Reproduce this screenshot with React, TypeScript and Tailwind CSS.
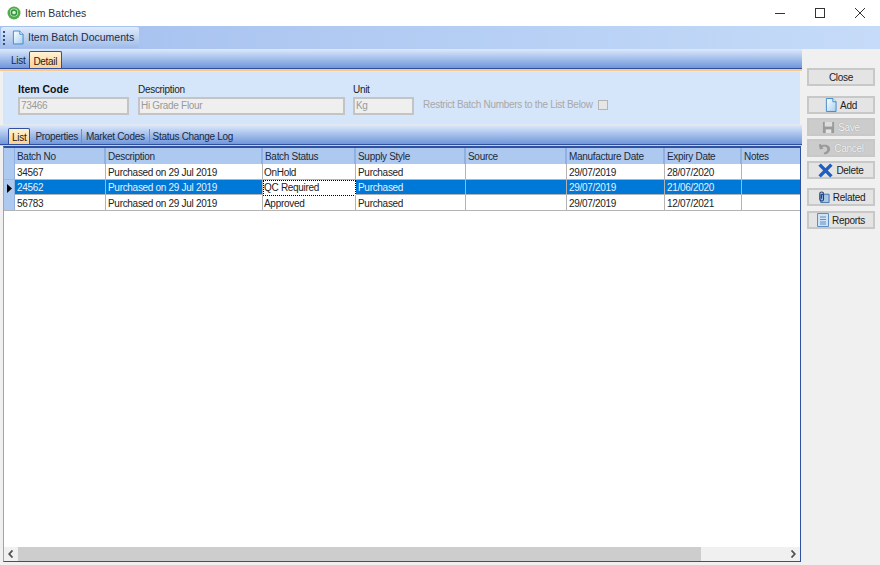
import React from 'react';

const COLS = 'grid grid-cols-[11px_91px_157px_93px_110px_101px_98px_77px_1fr]';

const batches = [
  { no: '34567', status: 'OnHold', expiry: '28/07/2020', h: 'h-[16px]' },
  { no: '24562', status: 'QC Required', expiry: '21/06/2020', h: 'h-[15px]', selected: true },
  { no: '56783', status: 'Approved', expiry: '12/07/2021', h: 'h-[16px]' },
];

const headers = ['Batch No', 'Description', 'Batch Status', 'Supply Style', 'Source', 'Manufacture Date', 'Expiry Date', 'Notes'];

function DocIcon({ className = 'w-[13px] h-[15px]' }: { className?: string }) {
  return (
    <svg viewBox="0 0 13 15" className={className}>
      <defs>
        <linearGradient id="docfill" x1="0" y1="0" x2="1" y2="1">
          <stop offset="0" stopColor="#ffffff" />
          <stop offset="1" stopColor="#a4d0f2" />
        </linearGradient>
      </defs>
      <path d="M1.5.5h7l3.5 3.5v10.5h-10.5z" fill="url(#docfill)" stroke="#3a86c8" />
      <path d="M8.5.5v3.5h3.5" fill="#e8f3fc" stroke="#3a86c8" />
    </svg>
  );
}

function SideButton({ label, icon, disabled, className = '' }: { label: string; icon?: React.ReactNode; disabled?: boolean; className?: string }) {
  return (
    <button
      className={`w-[68px] h-[18px] flex items-center justify-center gap-[3px] border-2 border-[#c8c8c8] leading-none ${disabled ? 'bg-[#cccccc] text-[#f4f4f4] [text-shadow:0_0_1px_#8a8a8a]' : 'bg-[#e4e4e4] text-[#222222]'} ${className}`}
    >
      {icon}
      <span className="pt-[2px]">{label}</span>
    </button>
  );
}

function SubTab({ label, className = '' }: { label: string; className?: string }) {
  return <div className={`h-[16px] pt-[1px] flex items-center text-[#1a2a44] ${className}`}>{label}</div>;
}

export default function App() {
  return (
    <div className="w-[880px] h-[565px] overflow-hidden flex flex-col bg-[#f0f0f0] text-[10px] tracking-[-0.3px] text-[#222222] font-['Liberation_Sans',sans-serif]">
      {/* title bar */}
      <div className="h-[26px] shrink-0 bg-white flex items-center pl-[7px]">
        <svg viewBox="0 0 14 14" className="w-[14px] h-[14px]">
          <circle cx="7" cy="7" r="6.5" fill="#4fae4a" />
          <circle cx="7" cy="6.5" r="4" fill="#d9efd6" />
          <circle cx="7" cy="6.5" r="2.6" fill="none" stroke="#2f8f3a" strokeWidth="1.5" />
        </svg>
        <span className="ml-[4px] pt-[1px] text-[10.5px] tracking-normal text-[#333333]">Item Batches</span>
        <div className="ml-auto flex items-center">
          <svg viewBox="0 0 10 10" className="w-[10px] h-[10px] mr-[30px]"><path d="M0 5.5h10" stroke="#333333" /></svg>
          <svg viewBox="0 0 10 10" className="w-[10px] h-[10px] mr-[30px]"><rect x=".5" y=".5" width="9" height="9" fill="none" stroke="#333333" /></svg>
          <svg viewBox="0 0 10 10" className="w-[10px] h-[10px] mr-[15px]"><path d="M0 0l10 10M10 0L0 10" stroke="#333333" /></svg>
        </div>
      </div>

      {/* toolbar */}
      <div className="h-[23px] shrink-0 bg-gradient-to-r from-[#a3bfee] to-[#c5dbf8] flex items-start pt-[1px]">
        <div className="ml-[1px] w-[138px] h-[21px] rounded-[2px] bg-gradient-to-b from-[#dfeafb] to-[#9fbce9] flex items-center text-[#1c2c48] text-[10.5px] tracking-normal">
          <div className="ml-[2px] flex flex-col gap-[2px]">
            <span className="w-[2px] h-[2px] bg-[#2f4f80]" />
            <span className="w-[2px] h-[2px] bg-[#2f4f80]" />
            <span className="w-[2px] h-[2px] bg-[#2f4f80]" />
            <span className="w-[2px] h-[2px] bg-[#2f4f80]" />
          </div>
          <DocIcon className="ml-[7px] w-[12px] h-[15px]" />
          <span className="ml-[4px]">Item Batch Documents</span>
        </div>
      </div>

      <div className="flex-1 min-h-0 flex">
        {/* main column */}
        <div className="w-[802px] shrink-0 flex flex-col">
          <div className="h-[20px] shrink-0 pl-[2px] flex items-end gap-[1px] bg-gradient-to-b from-[#dce9fb] to-[#7096da] border-b border-[#2f4f9f]">
            <div className="h-[17px] pt-[2px] pl-[9px] pr-[3px] flex items-center text-[#1a2a44]">List</div>
            <div className="h-[17px] pt-[2px] pl-[3px] pr-[4px] flex items-center border border-b-0 border-[#2f4f9f] bg-gradient-to-b from-[#fff3d6] to-[#ffcf8f] rounded-t-[2px]">Detail</div>
          </div>
          <div className="h-[2px] shrink-0 bg-[#fbc88c]" />

          {/* detail header */}
          <div className="h-[54px] shrink-0 bg-[#d5e5fa] ml-[3px] mr-[2px] border-t border-b border-[#e4e8ee] flex pl-[15px] pt-[11px]">
            <div className="w-[120px]">
              <div className="h-[12px] leading-[12px] font-bold text-[10.5px] tracking-normal text-[#111111]">Item Code</div>
              <div className="mt-[2px] w-[111px] h-[18px] border-2 border-[#c4c4c4] bg-[#efefef] pl-[1px] leading-[14px] text-[#9a9a9a]">73466</div>
            </div>
            <div className="w-[215px]">
              <div className="h-[12px] leading-[14px]">Description</div>
              <div className="mt-[2px] w-[207px] h-[18px] border-2 border-[#c4c4c4] bg-[#efefef] pl-[1px] leading-[14px] text-[#9a9a9a]">Hi Grade Flour</div>
            </div>
            <div className="w-[70px]">
              <div className="h-[12px] leading-[13px]">Unit</div>
              <div className="mt-[2px] w-[61px] h-[18px] border-2 border-[#c4c4c4] bg-[#efefef] pl-[1px] leading-[14px] text-[#9a9a9a]">Kg</div>
            </div>
            <div className="flex items-center self-start mt-[14px] text-[#a8a8a8] whitespace-nowrap">
              <span>Restrict Batch Numbers to the List Below</span>
              <span className="ml-[5px] w-[10px] h-[10px] border border-[#b4b4b4] bg-[#e6e6e6]" />
            </div>
          </div>

          {/* inner tabs */}
          <div className="h-[20px] shrink-0 pl-[8px] flex items-end bg-gradient-to-b from-[#dce9fb] to-[#7096da] border-b border-[#2f4f9f]">
            <div className="h-[16px] pt-[1px] pl-[3px] pr-[3px] flex items-center border border-b-0 border-[#2f4f9f] bg-gradient-to-b from-[#fff3d6] to-[#ffcf8f] rounded-t-[2px] text-[#1a1a1a]">List</div>
            <SubTab label="Properties" className="pl-[5px] pr-[3px]" />
            <div className="w-px h-[14px] mb-[1px] bg-[#6f8fc4]" />
            <SubTab label="Market Codes" className="pl-[4px] pr-[4px]" />
            <div className="w-px h-[14px] mb-[1px] bg-[#6f8fc4]" />
            <SubTab label="Status Change Log" className="pl-[3px]" />
          </div>
          <div className="h-[1px] shrink-0 bg-[#fbc88c]" />

          {/* grid */}
          <div className="flex-1 min-h-0 ml-[3px] mr-[1px] mb-[3px] flex flex-col bg-white border border-t-2 border-[#2f4f9f] border-l-[#8ea4d4]">
            <div className={`${COLS} h-[16px] shrink-0 bg-[#adc9ef] text-[#222a3a]`}>
              <div className="border-r border-[#8fb0e0]" />
              {headers.map((h) => (
                <div key={h} className="pl-[2px] leading-[18px] border-r-2 border-[#8fb0e0] last:border-r-0 whitespace-nowrap overflow-hidden">{h}</div>
              ))}
            </div>
            {batches.map((b) => {
              const cells = [b.no, 'Purchased on 29 Jul 2019', b.status, 'Purchased', '', '29/07/2019', b.expiry, ''];
              return (
                <div key={b.no} className={`${COLS} ${b.h} shrink-0 border-b border-[#b4b4b4] ${b.selected ? 'bg-[#0078d7] text-[#e6f2fc]' : 'text-[#222222]'}`}>
                  <div className="bg-[#adc9ef] border-r border-[#8fb0e0] flex items-center justify-center">
                    {b.selected && (
                      <svg viewBox="0 0 5 9" className="w-[5px] h-[9px]"><path d="M0 0l5 4.5L0 9z" fill="#000000" /></svg>
                    )}
                  </div>
                  {cells.map((c, i) =>
                    b.selected && i === 2 ? (
                      <div key={i} className="leading-[14px] bg-white text-[#222222] border border-dotted border-black whitespace-nowrap">{c}</div>
                    ) : (
                      <div key={i} className={`${i === 2 ? 'pl-[1px]' : 'pl-[2px]'} ${b.selected ? 'leading-[15px]' : 'leading-[17px]'} border-r border-[#b4b4b4] last:border-r-0 whitespace-nowrap overflow-hidden`}>{c}</div>
                    )
                  )}
                </div>
              );
            })}
            <div className="flex-1" />
            <div className="h-[14px] shrink-0 flex items-center bg-[#f0f0f0]">
              <div className="w-[14px] flex justify-center">
                <svg viewBox="0 0 6 8" className="w-[6px] h-[8px]"><path d="M4.5.5L1.2 4l3.3 3.5" fill="none" stroke="#505050" strokeWidth="1.8" /></svg>
              </div>
              <div className="w-[683px] h-full bg-[#cdcdcd]" />
              <div className="flex-1" />
              <div className="w-[14px] flex justify-center">
                <svg viewBox="0 0 6 8" className="w-[6px] h-[8px]"><path d="M1.5.5L4.8 4 1.5 7.5" fill="none" stroke="#505050" strokeWidth="1.8" /></svg>
              </div>
            </div>
          </div>
        </div>

        {/* side buttons */}
        <div className="flex-1 flex flex-col pl-[5px] pt-[19px]">
          <SideButton label="Close" />
          <SideButton label="Add" className="mt-[10px]" icon={<DocIcon className="w-[12px] h-[14px]" />} />
          <SideButton
            label="Save"
            disabled
            className="mt-[4px]"
            icon={
              <svg viewBox="0 0 14 14" className="w-[13px] h-[13px]">
                <path d="M1 1h12v12H1z" fill="#9a9a9a" />
                <path d="M3 1h8v5H3z" fill="#dddddd" />
                <path d="M4 9h6v4H4z" fill="#e4e4e4" />
              </svg>
            }
          />
          <SideButton
            label="Cancel"
            disabled
            className="mt-[3px]"
            icon={
              <svg viewBox="0 0 14 14" className="w-[13px] h-[13px]">
                <path d="M1 3l1 5 4-1-1.5-1.5C7 4 10 5 10 7.5S8 11 6 11.5l1 2c3.5-.5 6-3 6-6S9.5 2 4 3.5L2.5 2z" fill="#9a9a9a" />
              </svg>
            }
          />
          <SideButton
            label="Delete"
            className="mt-[4px]"
            icon={
              <svg viewBox="0 0 14 14" className="w-[15px] h-[15px]">
                <path d="M1.5 1.5l11 11M12.5 1.5l-11 11" stroke="#1f5fc0" strokeWidth="3.2" />
              </svg>
            }
          />
          <SideButton
            label="Related"
            className="mt-[9px]"
            icon={
              <svg viewBox="0 0 14 14" className="w-[13px] h-[14px]">
                <path d="M4 4h9v9H4z" fill="#a9c8ea" stroke="#3f6fa8" />
                <path d="M7 3.5C7 1 3 1 3 3.5v6c0 2.5 4 2.5 4 0V5C7 3.8 5 3.8 5 5v4" fill="none" stroke="#1f3f78" strokeWidth="1.2" />
              </svg>
            }
          />
          <SideButton
            label="Reports"
            className="mt-[5px]"
            icon={
              <svg viewBox="0 0 12 14" className="w-[12px] h-[14px]">
                <path d="M.5.5h11v13H.5z" fill="#cfe3f6" stroke="#5f8fc0" />
                <path d="M3 4h6M3 6.5h6M3 9h6M3 11h6" stroke="#5f8fc0" />
              </svg>
            }
          />
        </div>
      </div>
    </div>
  );
}
